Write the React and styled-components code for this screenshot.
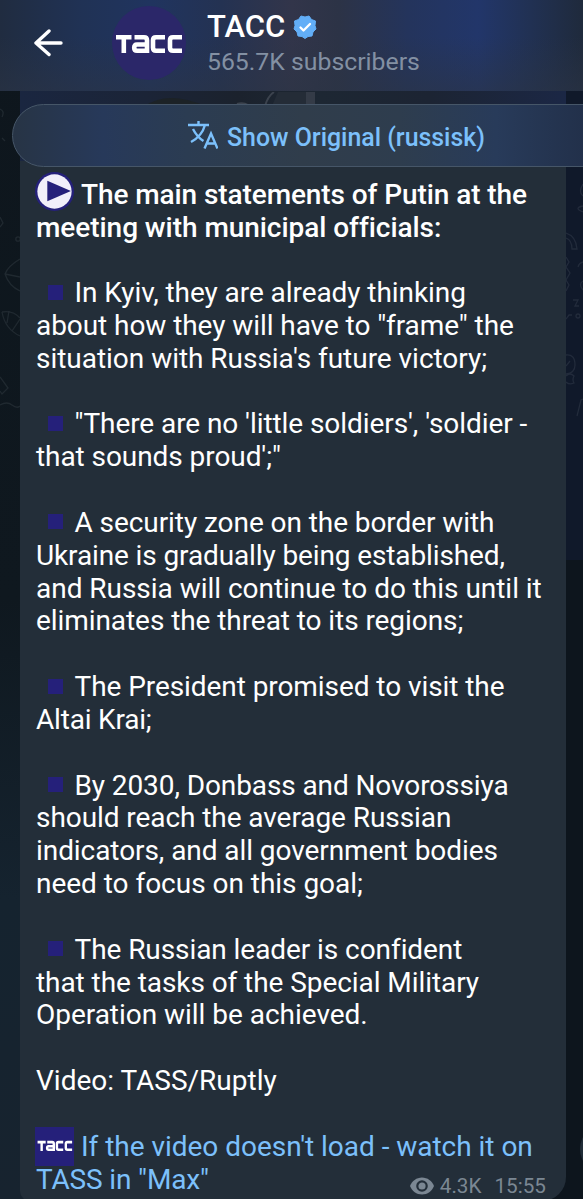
import styled, { createGlobalStyle } from 'styled-components'

const GlobalStyle = createGlobalStyle`
  * {
    box-sizing: border-box;
  }

  body {
    margin: 0;
    background: #0f1820;
  }
`

const Screen = styled.div`
  position: relative;
  display: flex;
  flex-direction: column;
  width: 583px;
  height: 1199px;
  overflow: hidden;
  font-family: Roboto, sans-serif;
  color: #fff;
  background:
    linear-gradient(to right, transparent 50%, #10192a 50%) 0 0 / 100% 560px no-repeat,
    linear-gradient(to right, transparent 50%, #0d151d 50%),
    linear-gradient(#0e161d 0%, #0f181f 50%, #15232f 75%, #17232f 100%);
`

const Header = styled.header`
  display: flex;
  flex: none;
  align-items: flex-start;
  height: 91px;
  background:
    linear-gradient(rgba(34, 48, 66, 0) 40%, rgba(43, 52, 68, 0.55) 100%),
    linear-gradient(to right, #202c40 0%, #203255 14%, #20345f 26%, #243252 38%, #32354a 50%, #2c3346 58%, #24345c 70%, #22366a 82%, #213153 91%, #1f2a3c 100%);
`

const BackIcon = styled.svg`
  flex: none;
  width: 30px;
  height: 28px;
  margin: 29px 0 0 34px;
`

const Avatar = styled.div`
  width: 74px;
  height: 74px;
  margin: 6px 0 0 48px;
  border-radius: 50%;
  background: #2b2769;
`

const Channel = styled.div`
  margin: 9px 0 0 21px;
`

const NameRow = styled.div`
  display: flex;
  align-items: center;
  height: 36px;
  gap: 8px;
`

const Name = styled.div`
  font-size: 31px;
  font-weight: 500;
  line-height: 36px;
`

const Subscribers = styled.div`
  height: 34px;
  font-size: 24.8px;
  line-height: 34px;
  color: #8390a3;
  white-space: nowrap;
`

const Chat = styled.main`
  flex: 1;
  padding: 0 17px 0 20px;
`

const Bubble = styled.article`
  position: relative;
  height: 1110px;
  border-radius: 0 0 24px 10px;
  background: #232e39;
  overflow: hidden;
`

const VideoStrip = styled.div`
  height: 70px;
  background: linear-gradient(to right, #1a2640 0%, #1b2437 23%, #1b222d 40%, #1d2733 55%, #1c2433 75%, #1b2745 100%);
`

const Message = styled.div`
  padding: 17.7px 0 0 16px;
  font-size: 28px;
  line-height: 32.84px;
`

const Line = styled.div`
  height: 32.84px;
  white-space: nowrap;
  font-weight: ${({ $bold }) => ($bold ? 500 : 400)};
  color: ${({ $link }) => ($link ? '#7cc0fb' : '#fff')};
  letter-spacing: ${({ $spacing }) => $spacing}px;
`

const Emoji = styled.svg`
  width: 39px;
  height: 39px;
  margin: -10px 7px -9px -1px;
  vertical-align: ${({ $raise }) => $raise}px;
`

const Square = styled.span`
  display: inline-block;
  width: 15px;
  height: 15px;
  margin: 0 11.5px 0 12px;
  vertical-align: 2.5px;
  background: #25207a;
`

const Meta = styled.div`
  position: absolute;
  right: 20px;
  bottom: 1px;
  display: flex;
  align-items: center;
  font-size: 20.7px;
  line-height: 28px;
  color: #7b8793;
`

const Views = styled.span`
  margin: 0 13px 0 6px;
`

const TranslateBar = styled.button`
  position: absolute;
  top: 104px;
  left: 12px;
  display: flex;
  align-items: center;
  width: 646px;
  height: 63px;
  padding: 3px 0 0 175px;
  gap: 9px;
  border: 1px solid #465668;
  border-radius: 32px;
  font: 500 24.9px Roboto, sans-serif;
  color: #7cc0fb;
  background: linear-gradient(to right, #273445 0%, #27395a 14%, #2b3c52 27%, #303d4b 45%, #2e3d4e 60%, #283b5a 75%, #22304a 89%);
`

const TranslateIcon = styled.svg`
  width: 30px;
  height: 28px;
  margin-top: -5px;
`

const Doodles = styled.svg`
  position: absolute;
  left: ${({ $left }) => $left}px;
  top: 91px;
  width: 20px;
  height: 360px;
  fill: none;
  stroke: ${({ $stroke }) => $stroke};
  stroke-width: 1.3;
`

const ShareButton = styled.div`
  position: absolute;
  left: 580px;
  top: 1124px;
  width: 50px;
  height: 50px;
  border-radius: 50%;
  background: #202c37;
`

const TassLetters = () => (
  <g fill="none" stroke="#fff" strokeWidth="4.6">
    <path d="M0 2.3H15.5M7.8 2.3V18" />
    <path d="M18.5 2.3H28Q31 2.3 31 5.3V15.7H21Q18.2 15.7 18.2 12.8Q18.2 9.5 21 9.5H31" />
    <path d="M49 2.3H40Q37 2.3 37 5.3V12.7Q37 15.7 40 15.7H49" />
    <path d="M66 2.3H57Q54 2.3 54 5.3V12.7Q54 15.7 57 15.7H66" />
  </g>
)

const lines = [
  { text: 'The main statements of Putin at the', bold: true, icon: 'play', spacing: -0.09 },
  { text: 'meeting with municipal officials:', bold: true, spacing: -0.05 },
  {},
  { text: 'In Kyiv, they are already thinking', icon: 'square' },
  { text: 'about how they will have to "frame" the' },
  { text: "situation with Russia's future victory;", spacing: -0.03 },
  {},
  { text: "\"There are no 'little soldiers', 'soldier -", icon: 'square' },
  { text: "that sounds proud';\"" },
  {},
  { text: 'A security zone on the border with', icon: 'square' },
  { text: 'Ukraine is gradually being established,', spacing: -0.12 },
  { text: 'and Russia will continue to do this until it', spacing: -0.03 },
  { text: 'eliminates the threat to its regions;' },
  {},
  { text: 'The President promised to visit the', icon: 'square' },
  { text: 'Altai Krai;', spacing: -0.2 },
  {},
  { text: 'By 2030, Donbass and Novorossiya', icon: 'square', spacing: -0.1 },
  { text: 'should reach the average Russian' },
  { text: 'indicators, and all government bodies' },
  { text: 'need to focus on this goal;', spacing: -0.03 },
  {},
  { text: 'The Russian leader is confident', icon: 'square' },
  { text: 'that the tasks of the Special Military' },
  { text: 'Operation will be achieved.', spacing: -0.03 },
  {},
  { text: 'Video: TASS/Ruptly', spacing: 0 },
  {},
  { text: "If the video doesn't load - watch it on", icon: 'tass', link: true, spacing: -0.03 },
  { text: 'TASS in "Max"', link: true, spacing: -0.15 },
]

const LineIcon = ({ type }) => {
  if (type === 'square') return <Square />
  if (type === 'play') {
    return (
      <Emoji viewBox="0 0 38 38" $raise={2}>
        <circle cx="19" cy="19" r="19" fill="#25207a" />
        <circle cx="19" cy="19" r="16.7" fill="#f1effa" />
        <path d="M12 8.5L35 18.5L12 28.5Z" fill="#25207a" />
      </Emoji>
    )
  }
  if (type === 'tass') {
    return (
      <Emoji viewBox="0 0 38 38" $raise={-1}>
        <rect width="38" height="38" fill="#25207a" />
        <g transform="translate(2.5 13.5) scale(0.51 0.55)"><TassLetters /></g>
      </Emoji>
    )
  }
  return null
}

const App = () => (
  <>
    <GlobalStyle />
    <Screen>
      <Header>
        <BackIcon viewBox="0 0 30 28" fill="none" stroke="#fff" strokeWidth="3.4" strokeLinecap="round" strokeLinejoin="round">
          <path d="M27 14H2M15 2L2 14L15 25.5" />
        </BackIcon>
        <Avatar>
          <svg width="74" height="74" viewBox="0 0 74 74">
            <g transform="translate(4 29)"><TassLetters /></g>
          </svg>
        </Avatar>
        <Channel>
          <NameRow>
            <Name>TACC</Name>
            <svg width="24" height="24" viewBox="0 0 24 24">
              <path d="M12 2L16 1L18.5 4.5L22.5 6L22 10.5L23 14L20 17L19 21L15 21.5L12 23.5L9 21.5L5 21L4 17L1 14L2 10.5L1.5 6L5.5 4.5L8 1Z" fill="#62aef7" stroke="#62aef7" strokeLinejoin="round" />
              <path d="M7.5 12.5L10.5 15.5L17 9" fill="none" stroke="#fff" strokeWidth="2.3" strokeLinecap="round" strokeLinejoin="round" />
            </svg>
          </NameRow>
          <Subscribers>565.7K subscribers</Subscribers>
        </Channel>
      </Header>
      <Doodles viewBox="0 0 20 360" $left={0} $stroke="#202930">
        <path d="M0 18Q5 20 2 26M2 47L5 50M0 126L3 132L0 136" />
        <circle cx="18" cy="148" r="2.2" />
        <path d="M20 168Q8 175 5 183Q9 195 20 200M5 183L20 186" />
        <path d="M2 221Q13 219 20 227M2 221Q5 238 20 245M9 220L7 232M12 240L20 228" />
        <path d="M0 286L8 297L2 303L0 300M0 314Q7 310 12 314T20 315" />
      </Doodles>
      <Doodles viewBox="0 0 20 360" $left={566} $stroke="#222b3b">
        <path d="M17 93Q12 101 17 105M17 115Q7 117 17 121" />
        <path d="M0 142Q10 145 11 158H6Q6 149 0 147M0 166L3 171L0 176L4 182L0 189L3 194L0 200" />
        <path d="M17 171Q13 172 12 176M17 190Q12 193 17 199M7 209H12L9 215H13M0 228L3 224H6" />
        <circle cx="12" cy="225" r="2" />
        <path d="M0 264Q9 263 9 274Q9 282 0 283M0 275L4 270M0 285Q4 281 8 285Q6 289 8 292Q3 294 0 291M11 325L15 309L17 308" />
      </Doodles>
      <Chat>
        <Bubble>
          <VideoStrip>
            <svg width="546" height="14" viewBox="0 0 546 14">
              <path d="M125 14Q148 -2 185 14Z" fill="#1c2226" />
              <path d="M252 14L258 0H286V14Z" fill="#242c37" />
              <path d="M245 14Q248 4 254 0M217 12Q223 10 228 13" stroke="#3b424d" strokeWidth="2" fill="none" />
              <path d="M286 0H295V14H286Z" fill="#343b47" />
            </svg>
          </VideoStrip>
          <Message>
            {lines.map(({ text, bold, link, icon, spacing = -0.07 }, i) => (
              <Line key={i} $bold={bold} $link={link} $spacing={spacing}>
                <LineIcon type={icon} />
                {text}
              </Line>
            ))}
          </Message>
          <Meta>
            <svg width="24" height="18" viewBox="0 0 24 18">
              <path d="M12 0.5C6.5 0.5 2 4 0 9C2 14 6.5 17.5 12 17.5S22 14 24 9C22 4 17.5 0.5 12 0.5Z" fill="#7b8793" />
              <circle cx="12" cy="9" r="4.7" fill="none" stroke="#232e39" strokeWidth="2.2" />
            </svg>
            <Views>4.3K</Views>
            15:55
          </Meta>
        </Bubble>
      </Chat>
      <TranslateBar>
        <TranslateIcon viewBox="0 0 30 28" fill="none" stroke="#7cc0fb" strokeWidth="2.4">
          <path d="M0 4H21M10.5 0V4M17 4Q14 15 3 21M5 8Q9 16 15.5 20M16.5 27.5L23 12.5L29.5 27.5M18.8 22.5H27.2" />
        </TranslateIcon>
        Show Original (russisk)
      </TranslateBar>
      <ShareButton />
    </Screen>
  </>
)

export default App
